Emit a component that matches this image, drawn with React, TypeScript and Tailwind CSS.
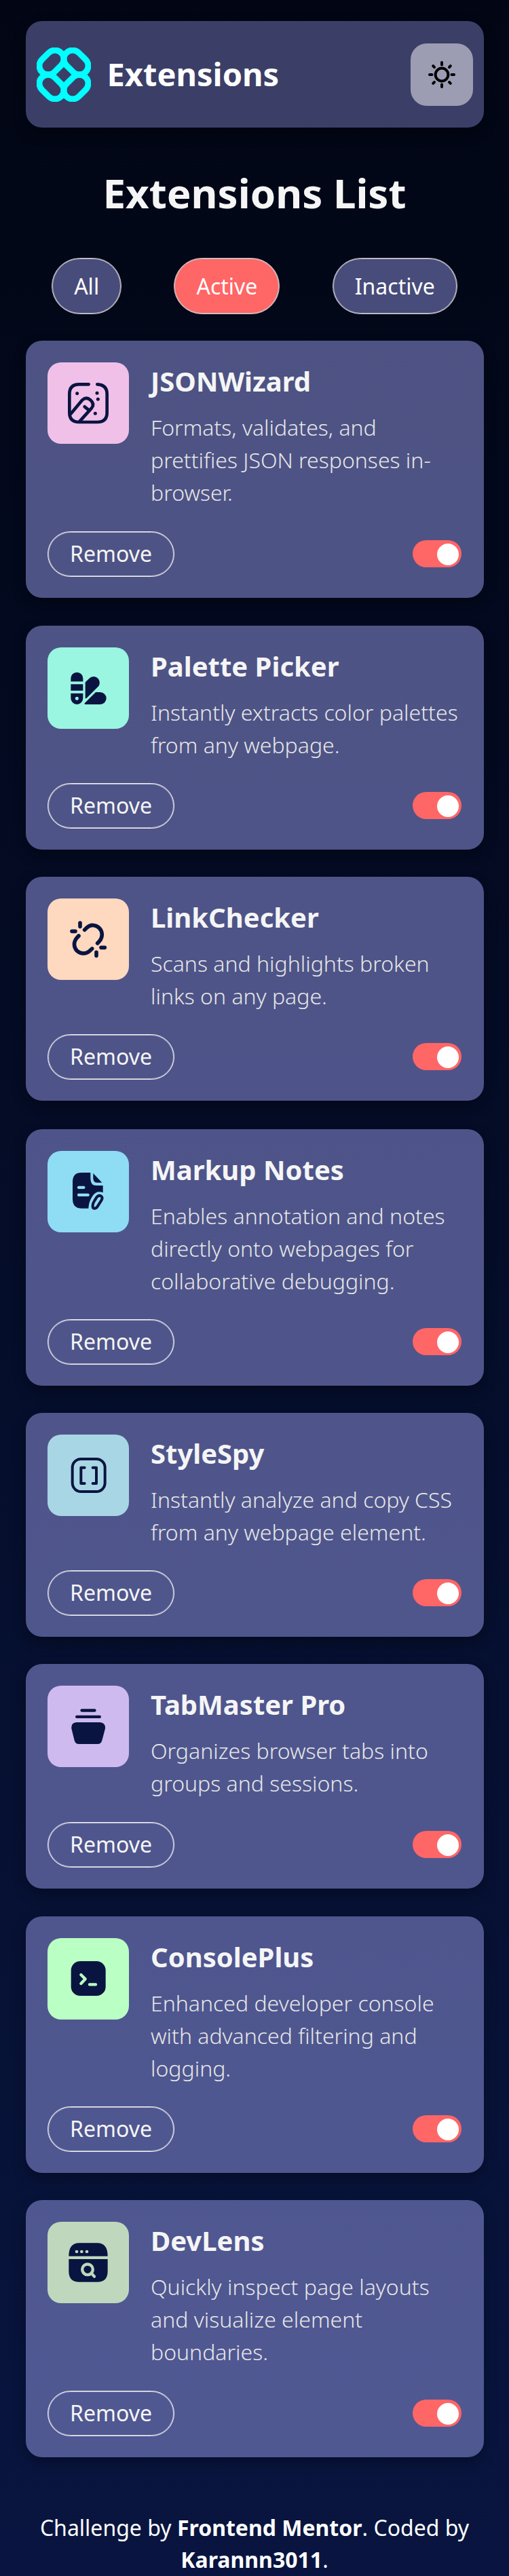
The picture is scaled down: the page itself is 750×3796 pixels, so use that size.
import { useState, type ReactNode } from "react";

type Extension = {
  name: string;
  description: string;
  tile: string;
  size: string;
  icon: ReactNode;
};

const ink = "#091540";

const extensions: Extension[] = [
  {
    name: "JSONWizard",
    description: "Formats, validates, and prettifies JSON responses in-browser.",
    tile: "bg-[#f0c0e8]",
    size: "h-[379px] mb-[41px]",
    icon: (
      <g fill="none" stroke={ink} strokeWidth="14" strokeLinecap="round" strokeLinejoin="round">
        <path d="M212 139H170Q127 139 127 182V264Q127 306 170 306H250Q293 306 293 264V182Q293 141 250 139" />
        <path d="M133 269L183 209Q201 192 219 208Q240 226 225 244L173 302M194 238L210 251" />
        <g fill={ink} stroke="none">
          <circle cx="161" cy="179" r="7.5" />
          <circle cx="249" cy="178" r="7.5" />
          <circle cx="253" cy="205" r="7.5" />
          <circle cx="241" cy="268" r="7.5" />
        </g>
      </g>
    ),
  },
  {
    name: "Palette Picker",
    description: "Instantly extracts color palettes from any webpage.",
    tile: "bg-[#9af5e1]",
    size: "h-[330px] mb-[40px]",
    icon: (
      <g fill={ink}>
        <path d="M133 193V179a27 27 0 0 1 54 0V193ZM133 205H187V233H133Z" />
        <path fillRule="evenodd" d="M133 245H187V267a27 27 0 0 1-54 0ZM160 260a7.5 7.5 0 1 0 0 15a7.5 7.5 0 0 0 0-15Z" />
        <path d="M197 196L218 176A27 27 0 0 1 256 213L202 267Q197 270 197 264Z" />
        <path d="M243 240H263a27 27 0 0 1 0 54H197Q191 293 194 289Z" />
      </g>
    ),
  },
  {
    name: "LinkChecker",
    description: "Scans and highlights broken links on any page.",
    tile: "bg-[#ffd8c0]",
    size: "h-[330px] mb-[42px]",
    icon: (
      <g fill="none" stroke={ink} strokeWidth="17" strokeLinecap="round">
        <path d="M194 181L203 172C221 154 245 159 258 172C272 186 277 209 260 230L251 240M168 207L159 217C142 238 148 260 160 273C173 286 197 290 215 275L227 264M174 150V166M138 187H153M267 259H283M246 280V295" />
      </g>
    ),
  },
  {
    name: "Markup Notes",
    description: "Enables annotation and notes directly onto webpages for collaborative debugging.",
    tile: "bg-[#8fdcf5]",
    size: "h-[378px] mb-[40px]",
    icon: (
      <g transform="translate(0 -6)">
        <path fill={ink} fillRule="evenodd" d="M181 144H220V170Q220 201 246 201H275V232Q247 221 230 246Q212 272 211 302H181Q141 302 141 262V184Q141 144 181 144ZM168 203a6.500 6.500 0 0 0 0 13H190a6.500 6.500 0 0 0 0-13ZM168 236a6.500 6.500 0 0 0 0 13H209a6.500 6.500 0 0 0 0-13Z" />
        <path fill={ink} d="M232 147L271 188H251Q232 188 232 170Z" />
        <path fill="none" stroke={ink} strokeWidth="12" strokeLinejoin="round" d="M247 253Q256 241 267 248Q275 254 269 265L250 295Q246 302 237 302Q229 302 230 290Q230 280 236 271Z" />
      </g>
    ),
  },
  {
    name: "StyleSpy",
    description: "Instantly analyze and copy CSS from any webpage element.",
    tile: "bg-[#a9d6e5]",
    size: "h-[330px] mb-[40px]",
    icon: (
      <g fill="none" stroke={ink} strokeWidth="12" strokeLinecap="round" strokeLinejoin="round">
        <rect x="140" y="150" width="144" height="144" rx="38" />
        <path d="M194 188H178V258H194M230 188H246V258H230" />
      </g>
    ),
  },
  {
    name: "TabMaster Pro",
    description: "Organizes browser tabs into groups and sessions.",
    tile: "bg-[#cfbaf0]",
    size: "h-[331px] mb-[41px]",
    icon: (
      <g fill={ink}>
        <rect x="175" y="145" width="70" height="13" rx="6.5" />
        <rect x="153" y="173" width="114" height="13" rx="6.500" />
        <path d="M158 204H262Q287 206 285 232L271 284Q267 300 251 300H169Q153 300 149 284L136 232Q133 206 158 204Z" />
      </g>
    ),
  },
  {
    name: "ConsolePlus",
    description: "Enhanced developer console with advanced filtering and logging.",
    tile: "bg-[#baffc4]",
    size: "h-[378px] mb-[40px]",
    icon: (
      <g transform="translate(0 -6)">
        <rect x="134" y="150" width="153" height="153" rx="40" fill={ink} />
        <path d="M178 210L197 229L178 249M216 253H243" fill="none" stroke="#baffc4" strokeWidth="13" strokeLinecap="round" strokeLinejoin="round" />
      </g>
    ),
  },
  {
    name: "DevLens",
    description: "Quickly inspect page layouts and visualize element boundaries.",
    tile: "bg-[#bfd8bd]",
    size: "h-[379px] mb-[1px]",
    icon: (
      <>
        <path fill={ink} d="M124 194Q124 136 170 136H250Q296 136 296 194ZM124 207H296V260Q296 308 250 308H170Q124 308 124 260Z" />
        <g fill="#bfd8bd">
          <circle cx="159" cy="174" r="7" />
          <circle cx="181" cy="174" r="7" />
          <circle cx="204" cy="174" r="7" />
        </g>
        <g fill="none" stroke="#bfd8bd" strokeWidth="13" strokeLinecap="round">
          <circle cx="207" cy="253" r="23.500" />
          <path d="M227 273L237 284" />
        </g>
      </>
    ),
  },
];

function Logo() {
  return (
    <svg viewBox="0 0 80 80" className="size-20 shrink-0" fill="none" stroke="#00ffff" strokeWidth="8.900">
      <rect x="1.900" y="8.950" width="40.200" height="26.100" rx="13.050" transform="rotate(-45 22 22)" />
      <rect x="37.900" y="8.950" width="40.200" height="26.100" rx="13.050" transform="rotate(45 58 22)" />
      <rect x="1.900" y="44.950" width="40.200" height="26.100" rx="13.050" transform="rotate(45 22 58)" />
      <rect x="37.900" y="44.950" width="40.200" height="26.100" rx="13.050" transform="rotate(-45 58 58)" />
    </svg>
  );
}

function SunIcon() {
  return (
    <svg viewBox="-22 -22 44 44" className="size-11" fill="none" stroke="#000" strokeWidth="4" strokeLinecap="round">
      <circle r="9.400" />
      <path d="M0-18V-14.500M0 18V14.500M-18 0H-14.500M18 0H14.500M-12.800-12.800L-11-11M12.800-12.800L11-11M-12.800 12.800L-11 11M12.800 12.800L11 11" />
    </svg>
  );
}

function Card({ extension, onRemove }: { extension: Extension; onRemove: () => void }) {
  const [on, setOn] = useState(true);
  return (
    <article
      className={`${extension.size} flex flex-col justify-between rounded-[24px] bg-[#8085cc]/60 px-[32.5px] pt-8 pb-[31.5px] shadow-[0_8px_20px_rgba(0,0,0,0.3)]`}
    >
      <div className="flex gap-8">
        <div className={`${extension.tile} size-[120px] shrink-0 rounded-[20px]`}>
          <svg viewBox="30 42 360 360" className="size-full">
            {extension.icon}
          </svg>
        </div>
        <div>
          <h2 className="text-[40px] leading-[56px] font-bold text-[#f5f5f5]">{extension.name}</h2>
          <p className="mt-4 text-[32px] leading-[48px] font-light text-[#e6e6e6]">{extension.description}</p>
        </div>
      </div>
      <div className="flex items-center justify-between">
        <button
          onClick={onRemove}
          className="h-[67px] w-[187px] rounded-full border border-[#f5f5f5] text-[32px] leading-none text-[#f5f5f5] shadow-[inset_0_0_0_1px_rgba(245,245,245,0.6)]"
        >
          Remove
        </button>
        <button
          role="switch"
          aria-checked={on}
          aria-label={extension.name}
          onClick={() => setOn(!on)}
          className={`flex h-10 w-[72px] items-center rounded-full px-1 pt-0.5 ${on ? "justify-end bg-[#ff6666]" : "justify-start bg-[#6b6f99]"}`}
        >
          <span className="size-8 rounded-full bg-white" />
        </button>
      </div>
    </article>
  );
}

export default function App() {
  const [items, setItems] = useState(extensions);
  const pill =
    "h-[83px] rounded-full border border-[#c9c9c9] px-8 text-[32px] leading-none text-white shadow-[inset_0_0_0_1px_rgba(201,201,201,0.8)]";
  return (
    <div className="flex h-[3796px] w-[750px] flex-col overflow-hidden bg-linear-to-b from-[#020614] to-[#091540] px-[37.5px] pt-[31px] font-['Noto_Sans',sans-serif] text-white">
      <header className="flex h-[157px] shrink-0 items-center justify-between rounded-[24px] bg-[#8085cc]/45 px-4 shadow-[0_8px_20px_rgba(0,0,0,0.3)]">
        <div className="flex items-center gap-6">
          <Logo />
          <span className="pb-0.5 text-[47px] leading-[60px] font-bold text-white">Extensions</span>
        </div>
        <button aria-label="Toggle theme" className="flex size-[92px] items-center justify-center rounded-[24px] bg-[#9c9db3]">
          <SunIcon />
        </button>
      </header>

      <h1 className="mt-[51px] text-center text-[60px] leading-[90px] font-bold text-[#f5f5f5]">Extensions List</h1>

      <nav className="mt-[51px] flex shrink-0 justify-around">
        <button className={`${pill} bg-[#484c7b]`}>All</button>
        <button className={`${pill} bg-[#ff6666]`}>Active</button>
        <button className={`${pill} bg-[#484c7b]`}>Inactive</button>
      </nav>

      <main className="mt-[39px] flex flex-col">
        {items.map((item) => (
          <Card
            key={item.name}
            extension={item}
            onRemove={() => setItems(items.filter((other) => other.name !== item.name))}
          />
        ))}
      </main>

      <footer className="mt-[79px] text-center text-[32px] leading-[47px]">
        Challenge by <b>Frontend Mentor</b>. Coded by <b>Karannn3011</b>.
      </footer>
    </div>
  );
}
